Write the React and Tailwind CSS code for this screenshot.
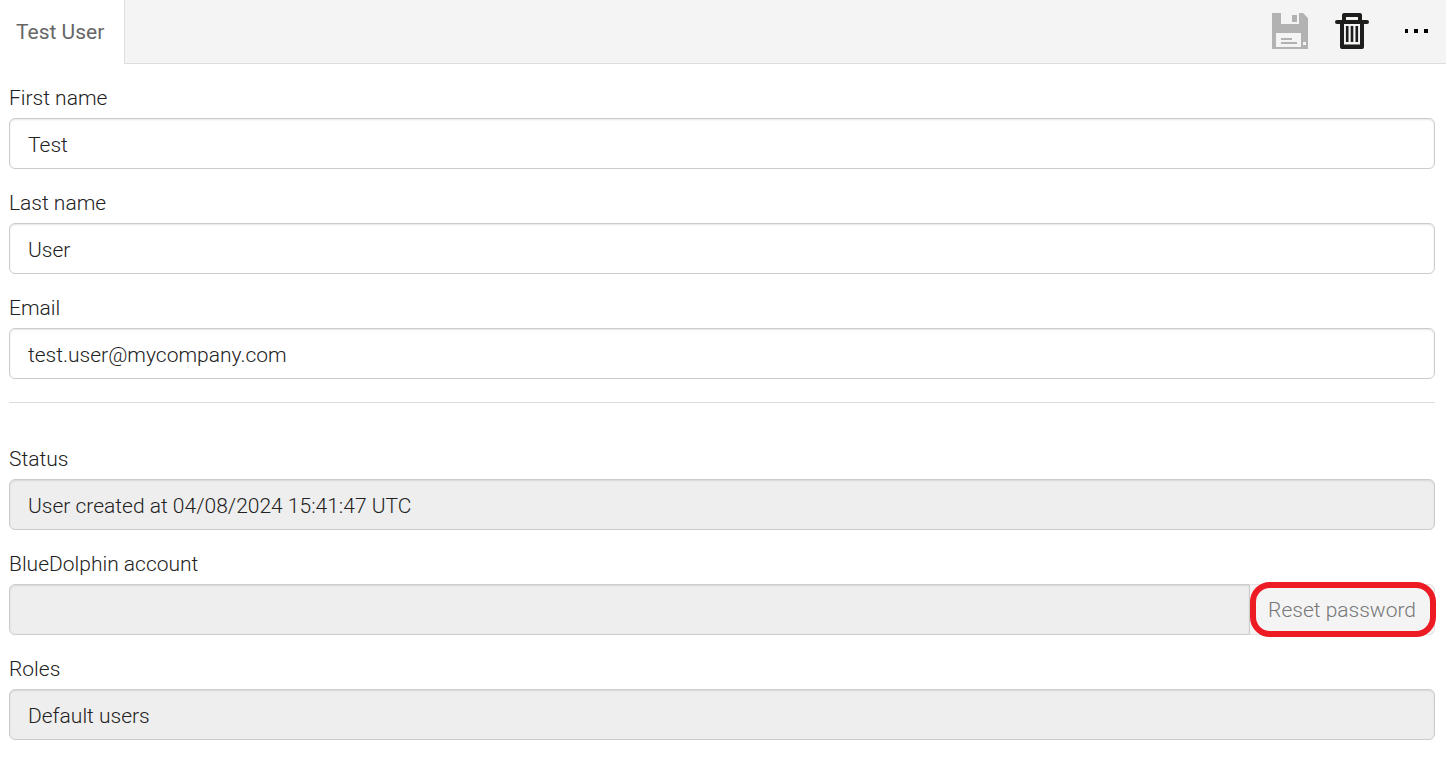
import { useState } from 'react'

const inputBase = 'block w-full h-[51px] px-[18px] pt-0.5 border border-[#cccccc] text-[21px] text-[#222222] shadow-[inset_0_1px_2px_rgba(0,0,0,0.1)] focus:outline-none'

function SaveIcon() {
  return (
    <svg width="36" height="36" viewBox="0 0 36 36" aria-hidden="true">
      <path d="M0 0h9v11h18V0h4l5 5v31H0z" fill="#b2b2b2" />
      <path d="M20 2h5v7h-5z" fill="#b2b2b2" />
      <path d="M4 20h25v14H4zM31 29h3v3h-3z" fill="#f4f4f4" />
      <path d="M9 25h11v2H9zM9 29h16v2H9z" fill="#b2b2b2" />
    </svg>
  )
}

function TrashIcon() {
  return (
    <svg width="34" height="36" viewBox="0 0 34 36" fill="none" stroke="#1d1d1b" aria-hidden="true">
      <path d="M2 9h30" strokeWidth="4" strokeLinecap="round" />
      <path d="M9 8V2h16v6" strokeWidth="4" strokeLinejoin="round" />
      <path d="M5 10v24q0 2 2 2h20q2 0 2-2V10h-4v21.5H9V10z" fill="#1d1d1b" stroke="none" />
      <path d="M12.2 13v16M17 13v16M21.8 13v16" strokeWidth="2.6" />
    </svg>
  )
}

function DotsIcon() {
  return (
    <svg width="24" height="4" viewBox="0 0 24 4" aria-hidden="true">
      <path d="M1 0h3v4H1zM10 0h4v4h-4zM20 0h4v4h-4z" fill="#000000" />
    </svg>
  )
}

function Field({ id, label, children }) {
  return (
    <div>
      <label htmlFor={id} className="block mb-1.5 text-[21px] leading-7">{label}</label>
      {children}
    </div>
  )
}

export default function App() {
  const [user, setUser] = useState({
    firstName: 'Test',
    lastName: 'User',
    email: 'test.user@mycompany.com',
  })

  const handleChange = (e) => setUser({ ...user, [e.target.name]: e.target.value })

  return (
    <div className="bg-white font-['Roboto',sans-serif] font-light text-[#222222]">
      <header className="flex h-16 bg-[#f4f4f4]">
        <h1 className="flex items-center pl-4 pr-5 pt-0.5 bg-white border-r border-[#dddddd] text-[21px] font-normal text-[#666666]">Test User</h1>
        <div className="flex flex-1 items-center justify-end pr-[18px] pb-0.5 border-b border-[#dddddd]">
          <button type="button" disabled aria-label="Save" className="mr-[27px]"><SaveIcon /></button>
          <button type="button" aria-label="Delete" className="mr-[35px] cursor-pointer"><TrashIcon /></button>
          <button type="button" aria-label="More" className="flex h-9 items-center cursor-pointer"><DotsIcon /></button>
        </div>
      </header>

      <form className="pt-5 pl-[9px] pr-[11px] pb-8">
        <div className="flex flex-col gap-5">
          <Field id="firstName" label="First name">
            <input id="firstName" name="firstName" type="text" value={user.firstName} onChange={handleChange} className={`${inputBase} rounded-md bg-white`} />
          </Field>
          <Field id="lastName" label="Last name">
            <input id="lastName" name="lastName" type="text" value={user.lastName} onChange={handleChange} className={`${inputBase} rounded-md bg-white`} />
          </Field>
          <Field id="email" label="Email">
            <input id="email" name="email" type="email" value={user.email} onChange={handleChange} className={`${inputBase} rounded-md bg-white`} />
          </Field>
        </div>

        <hr className="mt-[23px] mb-[42px] border-[#dddddd]" />

        <div className="flex flex-col gap-5">
          <Field id="status" label="Status">
            <input id="status" type="text" readOnly value="User created at 04/08/2024 15:41:47 UTC" className={`${inputBase} rounded-md bg-[#eeeeee]`} />
          </Field>
          <Field id="account" label="BlueDolphin account">
            <div className="flex">
              <input id="account" type="text" readOnly value="" className={`${inputBase} flex-1 rounded-l-md bg-[#eeeeee]`} />
              <button type="button" disabled className="relative px-[18px] pt-0.5 border border-l-0 border-[#e4e4e4] rounded-r-md bg-[#f4f4f4] text-[21px] text-[#777777] whitespace-nowrap">
                Reset password
                <span className="absolute -top-[3px] -bottom-[3px] left-0 -right-0.5 border-6 border-[#ed1c24] rounded-[20px]" />
              </button>
            </div>
          </Field>
          <Field id="roles" label="Roles">
            <input id="roles" type="text" readOnly value="Default users" className={`${inputBase} rounded-md bg-[#eeeeee]`} />
          </Field>
        </div>
      </form>
    </div>
  )
}
